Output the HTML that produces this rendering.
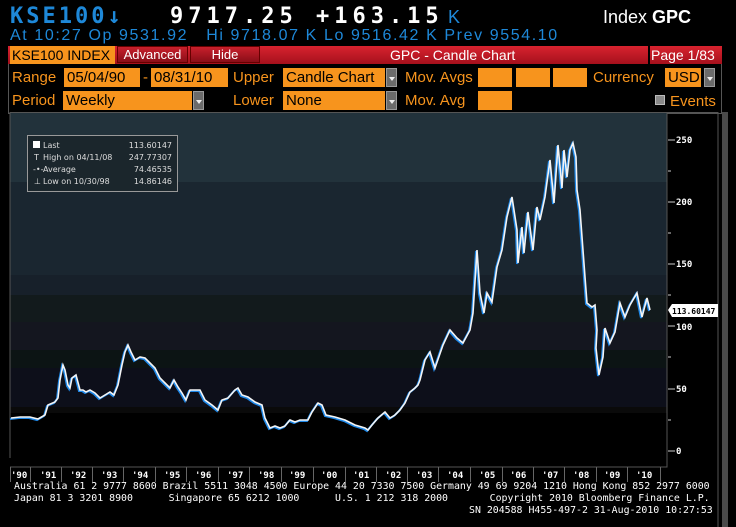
<!DOCTYPE html>
<html><head><meta charset="utf-8"><style>
*{margin:0;padding:0;box-sizing:border-box}
body{width:736px;height:527px;background:#000;overflow:hidden;position:relative;font-family:"Liberation Sans",sans-serif}
.a{position:absolute;white-space:nowrap}
.big{font-family:"DejaVu Sans Mono","Liberation Mono",monospace;font-weight:bold;font-size:22px;line-height:22px}
.hdr{font-family:"Liberation Sans Narrow","Liberation Sans",sans-serif}
.lab{color:#f7941d;font-size:15px;line-height:18px}
.in{background:#f7941d;color:#000;font-size:15px;line-height:19px;height:19px;padding-left:3px}
.arr{background:#6b6b6b;height:19px;width:11px;border:1px solid #999}
.arr:after{content:"";position:absolute;left:2px;top:8px;border-left:3px solid transparent;border-right:3px solid transparent;border-top:4px solid #eee}
.ft{color:#fff;font-family:"DejaVu Sans Mono","Liberation Mono",monospace;font-size:9.9px;line-height:12px}
</style></head><body>
<div class="a big" style="left:10px;top:6px;color:#1e88d8;letter-spacing:3px">KSE100↓</div>
<div class="a big" style="left:170px;top:6px;color:#fff;letter-spacing:5px">9717.25 +163.15</div>
<div class="a hdr" style="left:448px;top:7px;color:#1e88d8;font-size:18px">K</div>
<div class="a hdr" style="left:603px;top:7px;color:#fff;font-size:18px">Index <b>GPC</b></div>
<div class="a hdr" style="left:10px;top:27px;color:#1e88d8;font-size:16px;line-height:18px;letter-spacing:1.6px">At 10:27 Op 9531.92&nbsp;&nbsp; Hi 9718.07 K Lo 9516.42 K Prev 9554.10</div>

<div class="a" style="left:8px;top:46px;width:714px;height:18px;background:linear-gradient(#d8232f,#a5101c)"></div>
<div class="a hdr" style="left:10px;top:46px;width:105px;height:18px;background:#f7941d;color:#000;font-size:14px;line-height:18px;padding-left:2px">KSE100 INDEX</div>
<div class="a hdr" style="left:117px;top:46px;width:71px;height:17px;background:linear-gradient(#c8202c,#8a0e18);color:#fff;font-size:13px;line-height:16px;text-align:center;border:1px solid #600">Advanced</div>
<div class="a hdr" style="left:190px;top:46px;width:70px;height:17px;background:linear-gradient(#c8202c,#8a0e18);color:#fff;font-size:13px;line-height:16px;text-align:center;border:1px solid #600">Hide</div>
<div class="a hdr" style="left:390px;top:46px;color:#fff;font-size:14px;line-height:18px">GPC - Candle Chart</div>
<div class="a" style="left:648px;top:46px;width:2px;height:18px;background:#000"></div>
<div class="a hdr" style="left:651px;top:46px;color:#fff;font-size:14px;line-height:18px">Page 1/83</div>

<div class="a" style="left:8px;top:64px;width:714px;height:50px;border:1px solid #555;border-top:none"></div>
<div class="a lab" style="left:12px;top:69px">Range</div>
<div class="a in" style="left:64px;top:68px;width:76px">05/04/90</div>
<div class="a lab" style="left:143px;top:69px">-</div>
<div class="a in" style="left:151px;top:68px;width:77px">08/31/10</div>
<div class="a lab" style="left:233px;top:69px">Upper</div>
<div class="a in" style="left:283px;top:68px;width:102px">Candle Chart</div>
<div class="a arr" style="left:386px;top:68px"></div>
<div class="a lab" style="left:405px;top:69px">Mov. Avgs</div>
<div class="a in" style="left:478px;top:68px;width:34px"></div>
<div class="a in" style="left:516px;top:68px;width:34px"></div>
<div class="a in" style="left:553px;top:68px;width:34px"></div>
<div class="a lab" style="left:593px;top:69px">Currency</div>
<div class="a in" style="left:665px;top:68px;width:36px">USD</div>
<div class="a arr" style="left:704px;top:68px"></div>
<div class="a lab" style="left:12px;top:92px">Period</div>
<div class="a in" style="left:63px;top:91px;width:129px">Weekly</div>
<div class="a arr" style="left:193px;top:91px"></div>
<div class="a lab" style="left:233px;top:92px">Lower</div>
<div class="a in" style="left:283px;top:91px;width:102px">None</div>
<div class="a arr" style="left:386px;top:91px"></div>
<div class="a lab" style="left:405px;top:92px">Mov. Avg</div>
<div class="a in" style="left:478px;top:91px;width:34px"></div>
<div class="a" style="left:655px;top:95px;width:10px;height:10px;background:#888;border:1px solid #bbb"></div>
<div class="a lab" style="left:670px;top:93px">Events</div>

<svg class="a" style="left:0;top:0" width="736" height="527">
<rect x="10" y="113" width="657" height="69" fill="#22323b"/>
<rect x="10" y="182" width="657" height="93" fill="#1a2630"/>
<rect x="10" y="275" width="657" height="20" fill="#17202a"/>
<rect x="10" y="295" width="657" height="27" fill="#121a1c"/>
<rect x="10" y="322" width="657" height="28" fill="#14161f"/>
<rect x="10" y="350" width="657" height="18" fill="#0c1414"/>
<rect x="10" y="368" width="657" height="39" fill="#0d0f1a"/>
<rect x="10" y="407" width="657" height="6" fill="#0a0a0a"/>
<path d="M10 458V112.5H718V527M10 467H667V458M667 113V467" fill="none" stroke="#555" stroke-width="1"/>
<rect x="722" y="112" width="6" height="415" fill="#4a4a4a"/>
<g stroke="#666" stroke-width="1">
<path d="M10.5 467v15M30.5 467v15M61.5 467v15M92.5 467v15M123.5 467v15M155.5 467v15M186.5 467v15M218.5 467v15M249.5 467v15M281.5 467v15M313.5 467v15M345.5 467v15M376.5 467v15M407.5 467v15M438.5 467v15M470.5 467v15M502.5 467v15M533.5 467v15M564.5 467v15M596.5 467v15M627.5 467v15M660.5 467v15"/>
</g>
<g fill="#fff" font-family="DejaVu Sans Mono,monospace" font-size="9" font-weight="bold">
<text x="11" y="478">'90</text><text x="40" y="478">'91</text><text x="70" y="478">'92</text><text x="101" y="478">'93</text><text x="132" y="478">'94</text><text x="164" y="478">'95</text><text x="195" y="478">'96</text><text x="227" y="478">'97</text><text x="258" y="478">'98</text><text x="289" y="478">'99</text><text x="321" y="478">'00</text><text x="353" y="478">'01</text><text x="385" y="478">'02</text><text x="416" y="478">'03</text><text x="447" y="478">'04</text><text x="479" y="478">'05</text><text x="510" y="478">'06</text><text x="542" y="478">'07</text><text x="573" y="478">'08</text><text x="604" y="478">'09</text><text x="636" y="478">'10</text>
<text x="676" y="143">250</text><text x="676" y="205">200</text><text x="676" y="267">150</text><text x="676" y="330">100</text><text x="676" y="392">50</text><text x="676" y="454">0</text>
</g>
<g stroke="#ccc" stroke-width="1">
<path d="M668 140h7M668 202h7M668 264h7M668 326h7M668 389h7M668 451h7M668 171h3M668 233h3M668 295h3M668 357h3M668 420h3"/>
</g>
<path d="M668 310l4-6h46v13h-46z" fill="#fff"/>
<text x="672" y="314" font-family="DejaVu Sans Mono,monospace" font-size="8" font-weight="bold" fill="#000">113.60147</text>
<polyline fill="none" stroke="#1e88e8" stroke-width="2" transform="translate(-1,1)" points="11,418 20,417 30,417 38,419 45,415 48,405 55,402 58,398 60,380 63,365 65,370 68,385 70,388 72,378 76,375 80,390 83,390 86,392 90,390 95,393 100,398 105,395 110,392 114,395 118,385 122,365 125,352 128,345 131,352 135,360 140,357 145,358 150,363 155,368 160,378 165,383 170,388 174,380 178,387 182,393 186,400 190,390 195,390 200,390 205,400 212,405 218,410 222,400 228,398 235,390 238,388 242,395 248,397 255,402 262,405 265,418 270,428 275,426 280,428 285,426 290,420 295,422 300,420 308,420 312,412 318,403 322,405 326,415 335,417 345,420 355,425 365,428 368,430 372,425 378,418 385,412 390,418 395,415 400,410 405,403 410,392 415,388 418,385 420,380 425,360 430,352 435,368 443,345 450,330 457,338 463,343 470,330 473,313 477,250 480,293 484,313 487,293 492,302 497,267 502,250 507,217 512,197 517,230 518,263 522,227 524,253 528,212 533,250 537,207 540,220 545,197 550,160 554,203 558,145 562,188 564,150 567,177 570,150 573,143 576,157 577,190 580,210 582,237 585,277 587,303 592,307 595,305 597,330 596,348 599,375 603,357 605,328 610,343 615,332 620,303 625,317 630,305 637,293 642,317 647,298 650,310"/>
<polyline fill="none" stroke="#f4f4f4" stroke-width="1.6" points="11,418 20,417 30,417 38,419 45,415 48,405 55,402 58,398 60,380 63,365 65,370 68,385 70,388 72,378 76,375 80,390 83,390 86,392 90,390 95,393 100,398 105,395 110,392 114,395 118,385 122,365 125,352 128,345 131,352 135,360 140,357 145,358 150,363 155,368 160,378 165,383 170,388 174,380 178,387 182,393 186,400 190,390 195,390 200,390 205,400 212,405 218,410 222,400 228,398 235,390 238,388 242,395 248,397 255,402 262,405 265,418 270,428 275,426 280,428 285,426 290,420 295,422 300,420 308,420 312,412 318,403 322,405 326,415 335,417 345,420 355,425 365,428 368,430 372,425 378,418 385,412 390,418 395,415 400,410 405,403 410,392 415,388 418,385 420,380 425,360 430,352 435,368 443,345 450,330 457,338 463,343 470,330 473,313 477,250 480,293 484,313 487,293 492,302 497,267 502,250 507,217 512,197 517,230 518,263 522,227 524,253 528,212 533,250 537,207 540,220 545,197 550,160 554,203 558,145 562,188 564,150 567,177 570,150 573,143 576,157 577,190 580,210 582,237 585,277 587,303 592,307 595,305 597,330 596,348 599,375 603,357 605,328 610,343 615,332 620,303 625,317 630,305 637,293 642,317 647,298 650,310"/>
<rect x="27.5" y="135.5" width="150" height="56" fill="#1b262c" stroke="#999"/>
<rect x="33" y="141" width="7" height="7" fill="#fff"/>
<g fill="#ddd" font-family="DejaVu Sans,sans-serif" font-size="8">
<text x="43" y="148">Last</text><text x="172" y="148" text-anchor="end">113.60147</text>
<text x="34" y="160">T</text><text x="43" y="160">High on 04/11/08</text><text x="172" y="160" text-anchor="end">247.77307</text>
<text x="33" y="172">-•-</text><text x="43" y="172">Average</text><text x="172" y="172" text-anchor="end">74.46535</text>
<text x="34" y="184">⊥</text><text x="43" y="184">Low on 10/30/98</text><text x="172" y="184" text-anchor="end">14.86146</text>
</g>
</svg>
<div class="a ft" style="left:14px;top:481px">Australia 61 2 9777 8600 Brazil 5511 3048 4500 Europe 44 20 7330 7500 Germany 49 69 9204 1210 Hong Kong 852 2977 6000</div>
<div class="a ft" style="left:14px;top:493px">Japan 81 3 3201 8900&nbsp;&nbsp;&nbsp;&nbsp;&nbsp; Singapore 65 6212 1000&nbsp;&nbsp;&nbsp;&nbsp;&nbsp; U.S. 1 212 318 2000&nbsp;&nbsp;&nbsp;&nbsp;&nbsp;&nbsp; Copyright 2010 Bloomberg Finance L.P.</div>
<div class="a ft" style="left:469px;top:505px">SN 204588 H455-497-2 31-Aug-2010 10:27:53</div>
</body></html>
